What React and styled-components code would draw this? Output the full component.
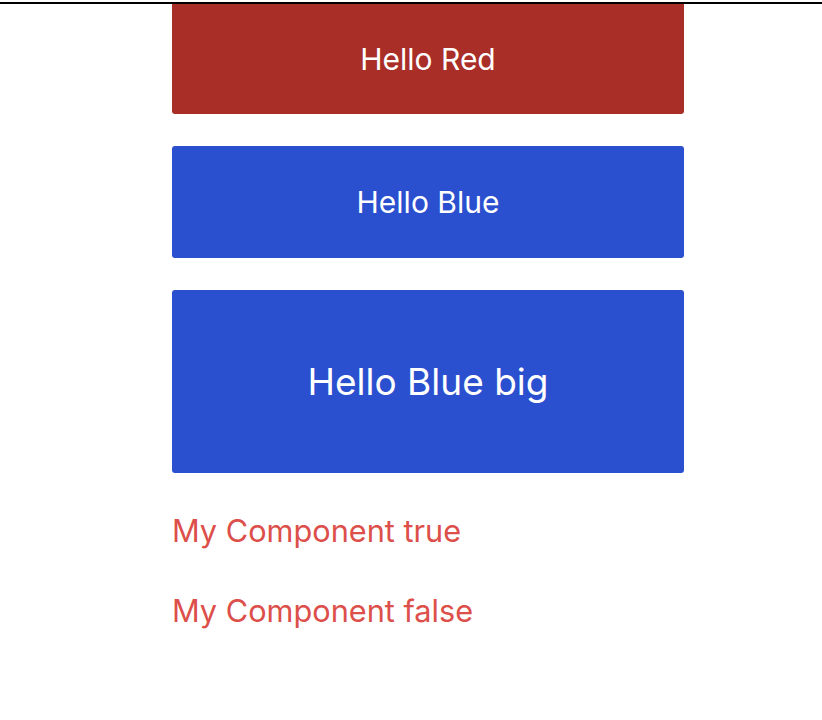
import React from 'react'
import styled, { createGlobalStyle } from 'styled-components'

const GlobalStyle = createGlobalStyle`
  body {
    margin: 0;
    background: #fff;
    font-family: Inter, 'Noto Sans', sans-serif;
  }
`

const TopRule = styled.div`
  margin-top: 2px;
  height: 2px;
  background: #000;
`

const Page = styled.main`
  width: 512px;
  margin-left: 172px;
  display: flex;
  flex-direction: column;
  gap: 32px;
`

const Button = styled.div`
  display: flex;
  align-items: center;
  justify-content: center;
  height: ${props => (props.big ? '183px' : '112px')};
  background: ${props => props.color};
  color: #fff;
  font-size: ${props => (props.big ? '37px' : '30px')};
  border-radius: 3px;
  ${props => props.flush && 'border-top-left-radius: 0; border-top-right-radius: 0; height: 110px;'}
`

const Labels = styled.div`
  display: flex;
  flex-direction: column;
  gap: 44px;
  padding-top: 8px;
`

const MyComponent = styled.p`
  margin: 0;
  color: #dc4f4a;
  font-size: 30.7px;
  line-height: 36px;
`

export default function App() {
  return (
    <>
      <GlobalStyle />
      <TopRule />
      <Page>
        <Button color='#a92e27' flush>Hello Red</Button>
        <Button color='#2a4fcf'>Hello Blue</Button>
        <Button color='#2a4fcf' big>Hello Blue big</Button>
        <Labels>
          <MyComponent>My Component true</MyComponent>
          <MyComponent>My Component false</MyComponent>
        </Labels>
      </Page>
    </>
  )
}
